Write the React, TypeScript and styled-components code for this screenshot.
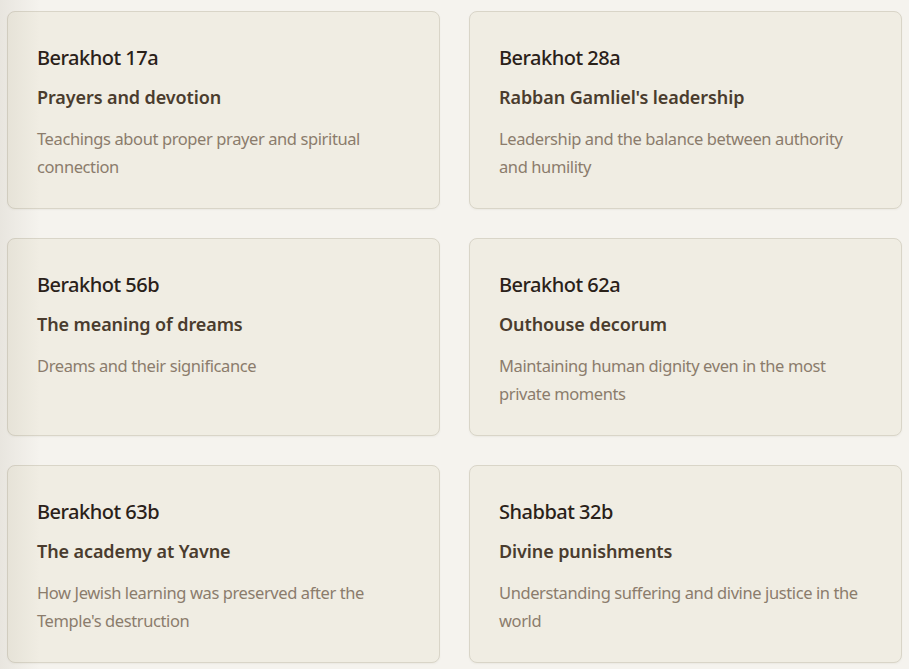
import React from "react";
import styled, { createGlobalStyle } from "styled-components";

const GlobalStyle = createGlobalStyle`
  html, body {
    margin: 0;
    padding: 0;
    background: #f5f3ee;
  }
  body {
    font-family: "Noto Sans", "Open Sans", "Liberation Sans", sans-serif;
  }
`;

const Page = styled.div`
  position: relative;
  min-height: 669px;
  padding: 11px 7px 0 7px;
  box-sizing: border-box;

  &::before {
    content: "";
    position: absolute;
    top: 0;
    left: 0;
    bottom: 0;
    width: 40px;
    background: linear-gradient(to right, rgba(120, 110, 90, 0.1), rgba(120, 110, 90, 0));
    pointer-events: none;
  }
`;

const Grid = styled.div`
  display: grid;
  grid-template-columns: 433px 433px;
  column-gap: 29px;
  row-gap: 29px;
`;

const Card = styled.div`
  background: #f0ede3;
  border: 1px solid #d9d5c8;
  border-radius: 8px;
  padding: 31px 29px 27px 29px;
  box-shadow: 0 1px 2px rgba(90, 80, 60, 0.06);
`;

const Title = styled.h3`
  margin: 0;
  font-size: 20px;
  line-height: 30px;
  font-weight: 500;
  color: #2a2119;
  letter-spacing: -0.5px;
`;

const Subtitle = styled.h4`
  margin: 11px 0 0 0;
  font-size: 18px;
  line-height: 26px;
  font-weight: 600;
  color: #4a3c2e;
  letter-spacing: -0.1px;
`;

const Description = styled.p`
  margin: 15px 0 0 0;
  font-size: 16.5px;
  line-height: 28px;
  color: #8b7c6c;
  letter-spacing: -0.4px;
`;

interface Passage {
  ref: string;
  topic: string;
  text: string;
}

const passages: Passage[] = [
  {
    ref: "Berakhot 17a",
    topic: "Prayers and devotion",
    text: "Teachings about proper prayer and spiritual connection",
  },
  {
    ref: "Berakhot 28a",
    topic: "Rabban Gamliel's leadership",
    text: "Leadership and the balance between authority and humility",
  },
  {
    ref: "Berakhot 56b",
    topic: "The meaning of dreams",
    text: "Dreams and their significance",
  },
  {
    ref: "Berakhot 62a",
    topic: "Outhouse decorum",
    text: "Maintaining human dignity even in the most private moments",
  },
  {
    ref: "Berakhot 63b",
    topic: "The academy at Yavne",
    text: "How Jewish learning was preserved after the Temple's destruction",
  },
  {
    ref: "Shabbat 32b",
    topic: "Divine punishments",
    text: "Understanding suffering and divine justice in the world",
  },
];

const App = () => {
  return (
    <>
      <GlobalStyle />
      <Page>
        <Grid>
          {passages.map((p) => (
            <Card key={p.ref}>
              <Title>{p.ref}</Title>
              <Subtitle>{p.topic}</Subtitle>
              <Description>{p.text}</Description>
            </Card>
          ))}
        </Grid>
      </Page>
    </>
  );
};

export default App;
